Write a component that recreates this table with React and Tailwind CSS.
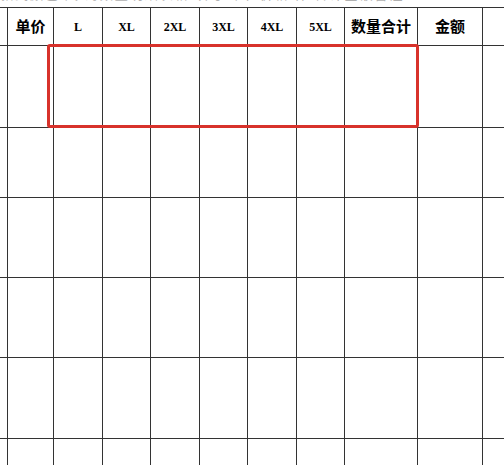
import React from "react";

const cols = ["7px", "45px", "48px", "47px", "48px", "47px", "48px", "47px", "72px", "64px", "40px"];
const rows = ["37px", "81px", "69px", "79px", "79px", "80px", "40px"];

const headers = ["", "单价", "L", "XL", "2XL", "3XL", "4XL", "5XL", "数量合计", "金额", ""];

const cjk = { fontFamily: '"Noto Sans CJK SC", "Noto Sans", sans-serif' };
const latin = { fontFamily: '"Liberation Serif", "DejaVu Serif", serif' };

const isLatin = (t) => /^[0-9A-Z]+$/.test(t);

export default function App() {
  return (
    <div className="w-[504px] h-[465px] overflow-hidden bg-white relative">
      {/* cut-off line of text from the row above */}
      <div className="h-[7px] overflow-hidden">
        <div
          className="-mt-[14px] text-[13px] leading-[16px] text-[#b0b0b0] whitespace-nowrap tracking-[2px]"
          style={cjk}
        >
          款式颜色 尺 码数量明细表格 填写 单位价格 件 合计金额备注
        </div>
      </div>

      {/* table grid, the gaps are the ruling lines */}
      <div
        className="grid gap-px bg-[#333333] pt-px w-[530px]"
        style={{ gridTemplateColumns: cols.join(" "), gridTemplateRows: rows.join(" ") }}
      >
        {rows.map((_, r) =>
          cols.map((_, c) => (
            <div key={`${r}-${c}`} className="bg-white flex items-center justify-center">
              {r === 0 && headers[c] ? (
                isLatin(headers[c]) ? (
                  <span className="text-[12px] font-bold text-black" style={latin}>
                    {headers[c]}
                  </span>
                ) : (
                  <span className="text-[15px] font-bold text-black" style={cjk}>
                    {headers[c]}
                  </span>
                )
              ) : null}
            </div>
          ))
        )}
      </div>

      {/* red highlight */}
      <div className="absolute left-[47px] top-[44px] w-[372px] h-[84px] border-[3px] border-[#d8322b] rounded-[3px]" />
    </div>
  );
}
